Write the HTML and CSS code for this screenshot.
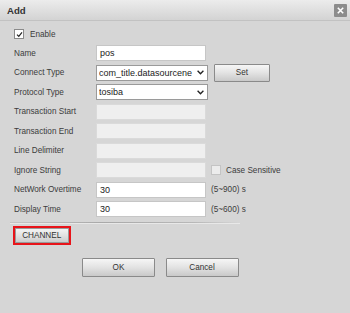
FILE: index.html
```html
<!DOCTYPE html>
<html>
<head>
<meta charset="utf-8">
<link rel="stylesheet" href="styles.css">
</head>
<body>
<div class="dialog">
  <div class="titlebar">
    <span class="title">Add</span>
    <span class="close"><svg width="7" height="7" viewBox="0 0 7 7"><path d="M0.8 0.8L6.2 6.2M6.2 0.8L0.8 6.2" stroke="#fff" stroke-width="1.6"/></svg></span>
  </div>
  <div class="content">
    <div class="enable-row">
      <span class="cb checked"><svg width="7" height="7" viewBox="0 0 7 7"><path d="M1 3.6L2.8 5.4L6 1.4" fill="none" stroke="#222" stroke-width="1.2"/></svg></span>
      <span class="lbl">Enable</span>
    </div>
    <div class="form">
      <span class="lbl">Name</span>
      <span class="input">pos</span>
      <span></span>

      <span class="lbl">Connect Type</span>
      <span class="select"><span class="sel-text">com_title.datasourcene</span><svg class="chev" width="7" height="5" viewBox="0 0 7 5"><path d="M0.6 0.8L3.5 3.8L6.4 0.8" fill="none" stroke="#222" stroke-width="1.3"/></svg></span>
      <span class="extra"><span class="btn set">Set</span></span>

      <span class="lbl">Protocol Type</span>
      <span class="select"><span class="sel-text">tosiba</span><svg class="chev" width="7" height="5" viewBox="0 0 7 5"><path d="M0.6 0.8L3.5 3.8L6.4 0.8" fill="none" stroke="#222" stroke-width="1.3"/></svg></span>
      <span></span>

      <span class="lbl">Transaction Start</span>
      <span class="input disabled"></span>
      <span></span>

      <span class="lbl">Transaction End</span>
      <span class="input disabled"></span>
      <span></span>

      <span class="lbl">Line Delimiter</span>
      <span class="input disabled"></span>
      <span></span>

      <span class="lbl">Ignore String</span>
      <span class="input disabled"></span>
      <span class="extra"><span class="cb dis"></span><span class="lbl">Case Sensitive</span></span>

      <span class="lbl">NetWork Overtime</span>
      <span class="input">30</span>
      <span class="extra"><span class="lbl">(5~900) s</span></span>

      <span class="lbl">Display Time</span>
      <span class="input">30</span>
      <span class="extra"><span class="lbl">(5~600) s</span></span>
    </div>
    <div class="sep"></div>
    <div class="channel-wrap"><span class="btn channel">CHANNEL</span></div>
    <div class="actions">
      <span class="btn act">OK</span>
      <span class="btn act">Cancel</span>
    </div>
  </div>
</div>
</body>
</html>
```
FILE: styles.css
```css
html, body {
  margin: 0;
  padding: 0;
  background: #d6d6d6;
}
.dialog {
  width: 350px;
  height: 313px;
  background: #d6d6d6;
  font-family: "Liberation Sans", Arial, sans-serif;
  color: #3a3a3a;
  overflow: hidden;
}
.titlebar {
  height: 20px;
  border-bottom: 1px solid #c2c2c2;
  background: linear-gradient(#ececec, #d3d3d3);
  display: flex;
  align-items: center;
  justify-content: space-between;
  padding: 0 3px 0 7px;
}
.title {
  font-weight: bold;
  font-size: 9.6px;
  color: #333;
}
.close {
  width: 13px;
  height: 13px;
  background: #8c8c8c;
  border-radius: 1px;
  display: flex;
  align-items: center;
  justify-content: center;
}
.content {
  padding: 8px 0 0 14px;
}
.lbl {
  font-size: 8.2px;
  color: #3c3c3c;
  white-space: nowrap;
}
.enable-row {
  display: flex;
  align-items: center;
  height: 10px;
}
.cb {
  width: 8px;
  height: 8px;
  border: 1px solid #8a8a8a;
  background: #fff;
  display: flex;
  align-items: center;
  justify-content: center;
  margin-right: 5px;
  flex: none;
}
.cb.dis {
  border-color: #c4c4c4;
  background: #ececec;
}
.enable-row .cb {
  margin-right: 6px;
}
.form {
  margin-top: 6px;
  display: grid;
  grid-template-columns: 82px 110px auto;
  grid-auto-rows: 16px;
  row-gap: 3.5px;
  align-items: center;
}
.input {
  height: 14px;
  border: 1px solid #c6c6c6;
  background: #fff;
  font-size: 9px;
  color: #222;
  padding-left: 3px;
  display: flex;
  align-items: center;
  box-sizing: content-box;
  width: 105px;
}
.input.disabled {
  background: #efefef;
  border-color: #dadada;
}
.select {
  height: 14px;
  border: 1px solid #9a9a9a;
  background: #fff;
  font-size: 9px;
  color: #222;
  padding-left: 2px;
  width: 108px;
  display: flex;
  align-items: center;
  overflow: hidden;
}
.sel-text {
  flex: 1;
  overflow: hidden;
  white-space: nowrap;
}
.chev {
  flex: none;
  margin: 0 3px 0 2px;
}
.extra {
  display: flex;
  align-items: center;
  padding-left: 5px;
  height: 16px;
}
.extra > .lbl:first-child {
  padding-left: 0;
}
.btn {
  display: flex;
  align-items: center;
  justify-content: center;
  font-size: 8.2px;
  color: #333;
  background: linear-gradient(#f6f6f6, #e2e2e2 50%, #c9c9c9);
  border: 1px solid #8a8a8a;
  border-radius: 1px;
  box-sizing: border-box;
}
.btn.set {
  width: 56px;
  height: 18px;
  margin-left: 3px;
}
.sep {
  margin-top: 4.5px;
  margin-left: -4px;
  width: 230px;
  height: 1px;
  background: linear-gradient(90deg, rgba(160,160,160,0.3), #a9a9a9 40%, #b8b8b8 80%, rgba(200,200,200,0));
  box-shadow: 0 1px 0 rgba(240,240,240,0.7);
}
.channel-wrap {
  margin-top: 3.5px;
  margin-left: -1.3px;
  display: flex;
}
.btn.channel {
  width: 58px;
  height: 19px;
  border: 2px solid #e8141a;
  border-radius: 0;
  box-shadow: inset 0 0 0 1px #9a9a9a;
}
.actions {
  margin-top: 13px;
  margin-left: 68px;
  display: flex;
  gap: 10.5px;
}
.btn.act {
  width: 73px;
  height: 19px;
}
```
